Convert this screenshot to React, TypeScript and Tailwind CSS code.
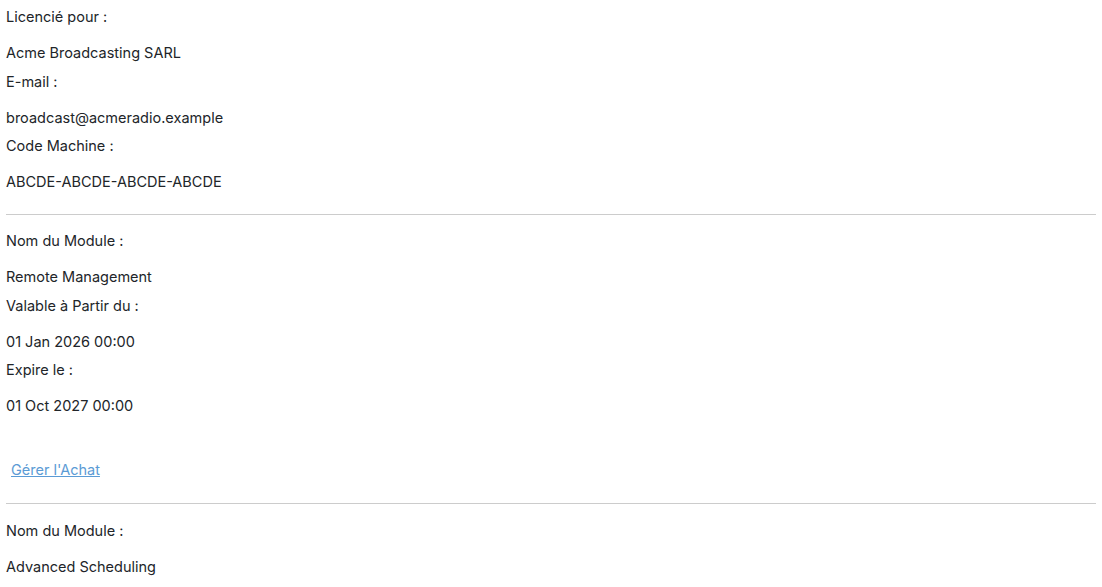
import React from 'react';

type Field = { label: string; value: string };

const owner: Field[] = [
    { label: 'Licencié pour :', value: 'Acme Broadcasting SARL' },
    { label: 'E-mail :', value: 'broadcast@acmeradio.example' },
    { label: 'Code Machine :', value: 'ABCDE-ABCDE-ABCDE-ABCDE' },
];

const modules: { fields: Field[]; link?: string }[] = [
    {
        fields: [
            { label: 'Nom du Module :', value: 'Remote Management' },
            { label: 'Valable à Partir du :', value: '01 Jan 2026 00:00' },
            { label: 'Expire le :', value: '01 Oct 2027 00:00' },
        ],
        link: "Gérer l'Achat",
    },
    {
        fields: [{ label: 'Nom du Module :', value: 'Advanced Scheduling' }],
    },
];

function FieldList({ fields }: { fields: Field[] }) {
    return (
        <div className="flex flex-col gap-[8.5px]">
            {fields.map((f) => (
                <div key={f.label} className="flex flex-col gap-4">
                    <div className="h-5 leading-5">{f.label}</div>
                    <div className="h-5 leading-5">{f.value}</div>
                </div>
            ))}
        </div>
    );
}

export default function App() {
    return (
        <div
            className="h-[587px] overflow-hidden bg-white px-[6px] pt-[7px] text-[14.5px] text-[#212529]"
            style={{ fontFamily: 'Inter, "Noto Sans", sans-serif' }}
        >
            <FieldList fields={owner} />
            <div className="mt-[22px] mb-[16px] h-px bg-[#cccccc]" />
            {modules.map((m, i) => (
                <div key={i}>
                    <FieldList fields={m.fields} />
                    {m.link && (
                        <>
                            <div className="mt-[44px] pl-[5px] h-5 leading-5">
                                <a href="#" className="text-[#5b9bd5] underline">
                                    {m.link}
                                </a>
                            </div>
                            <div className="mt-[23px] mb-[17px] h-px bg-[#cccccc]" />
                        </>
                    )}
                </div>
            ))}
        </div>
    );
}
